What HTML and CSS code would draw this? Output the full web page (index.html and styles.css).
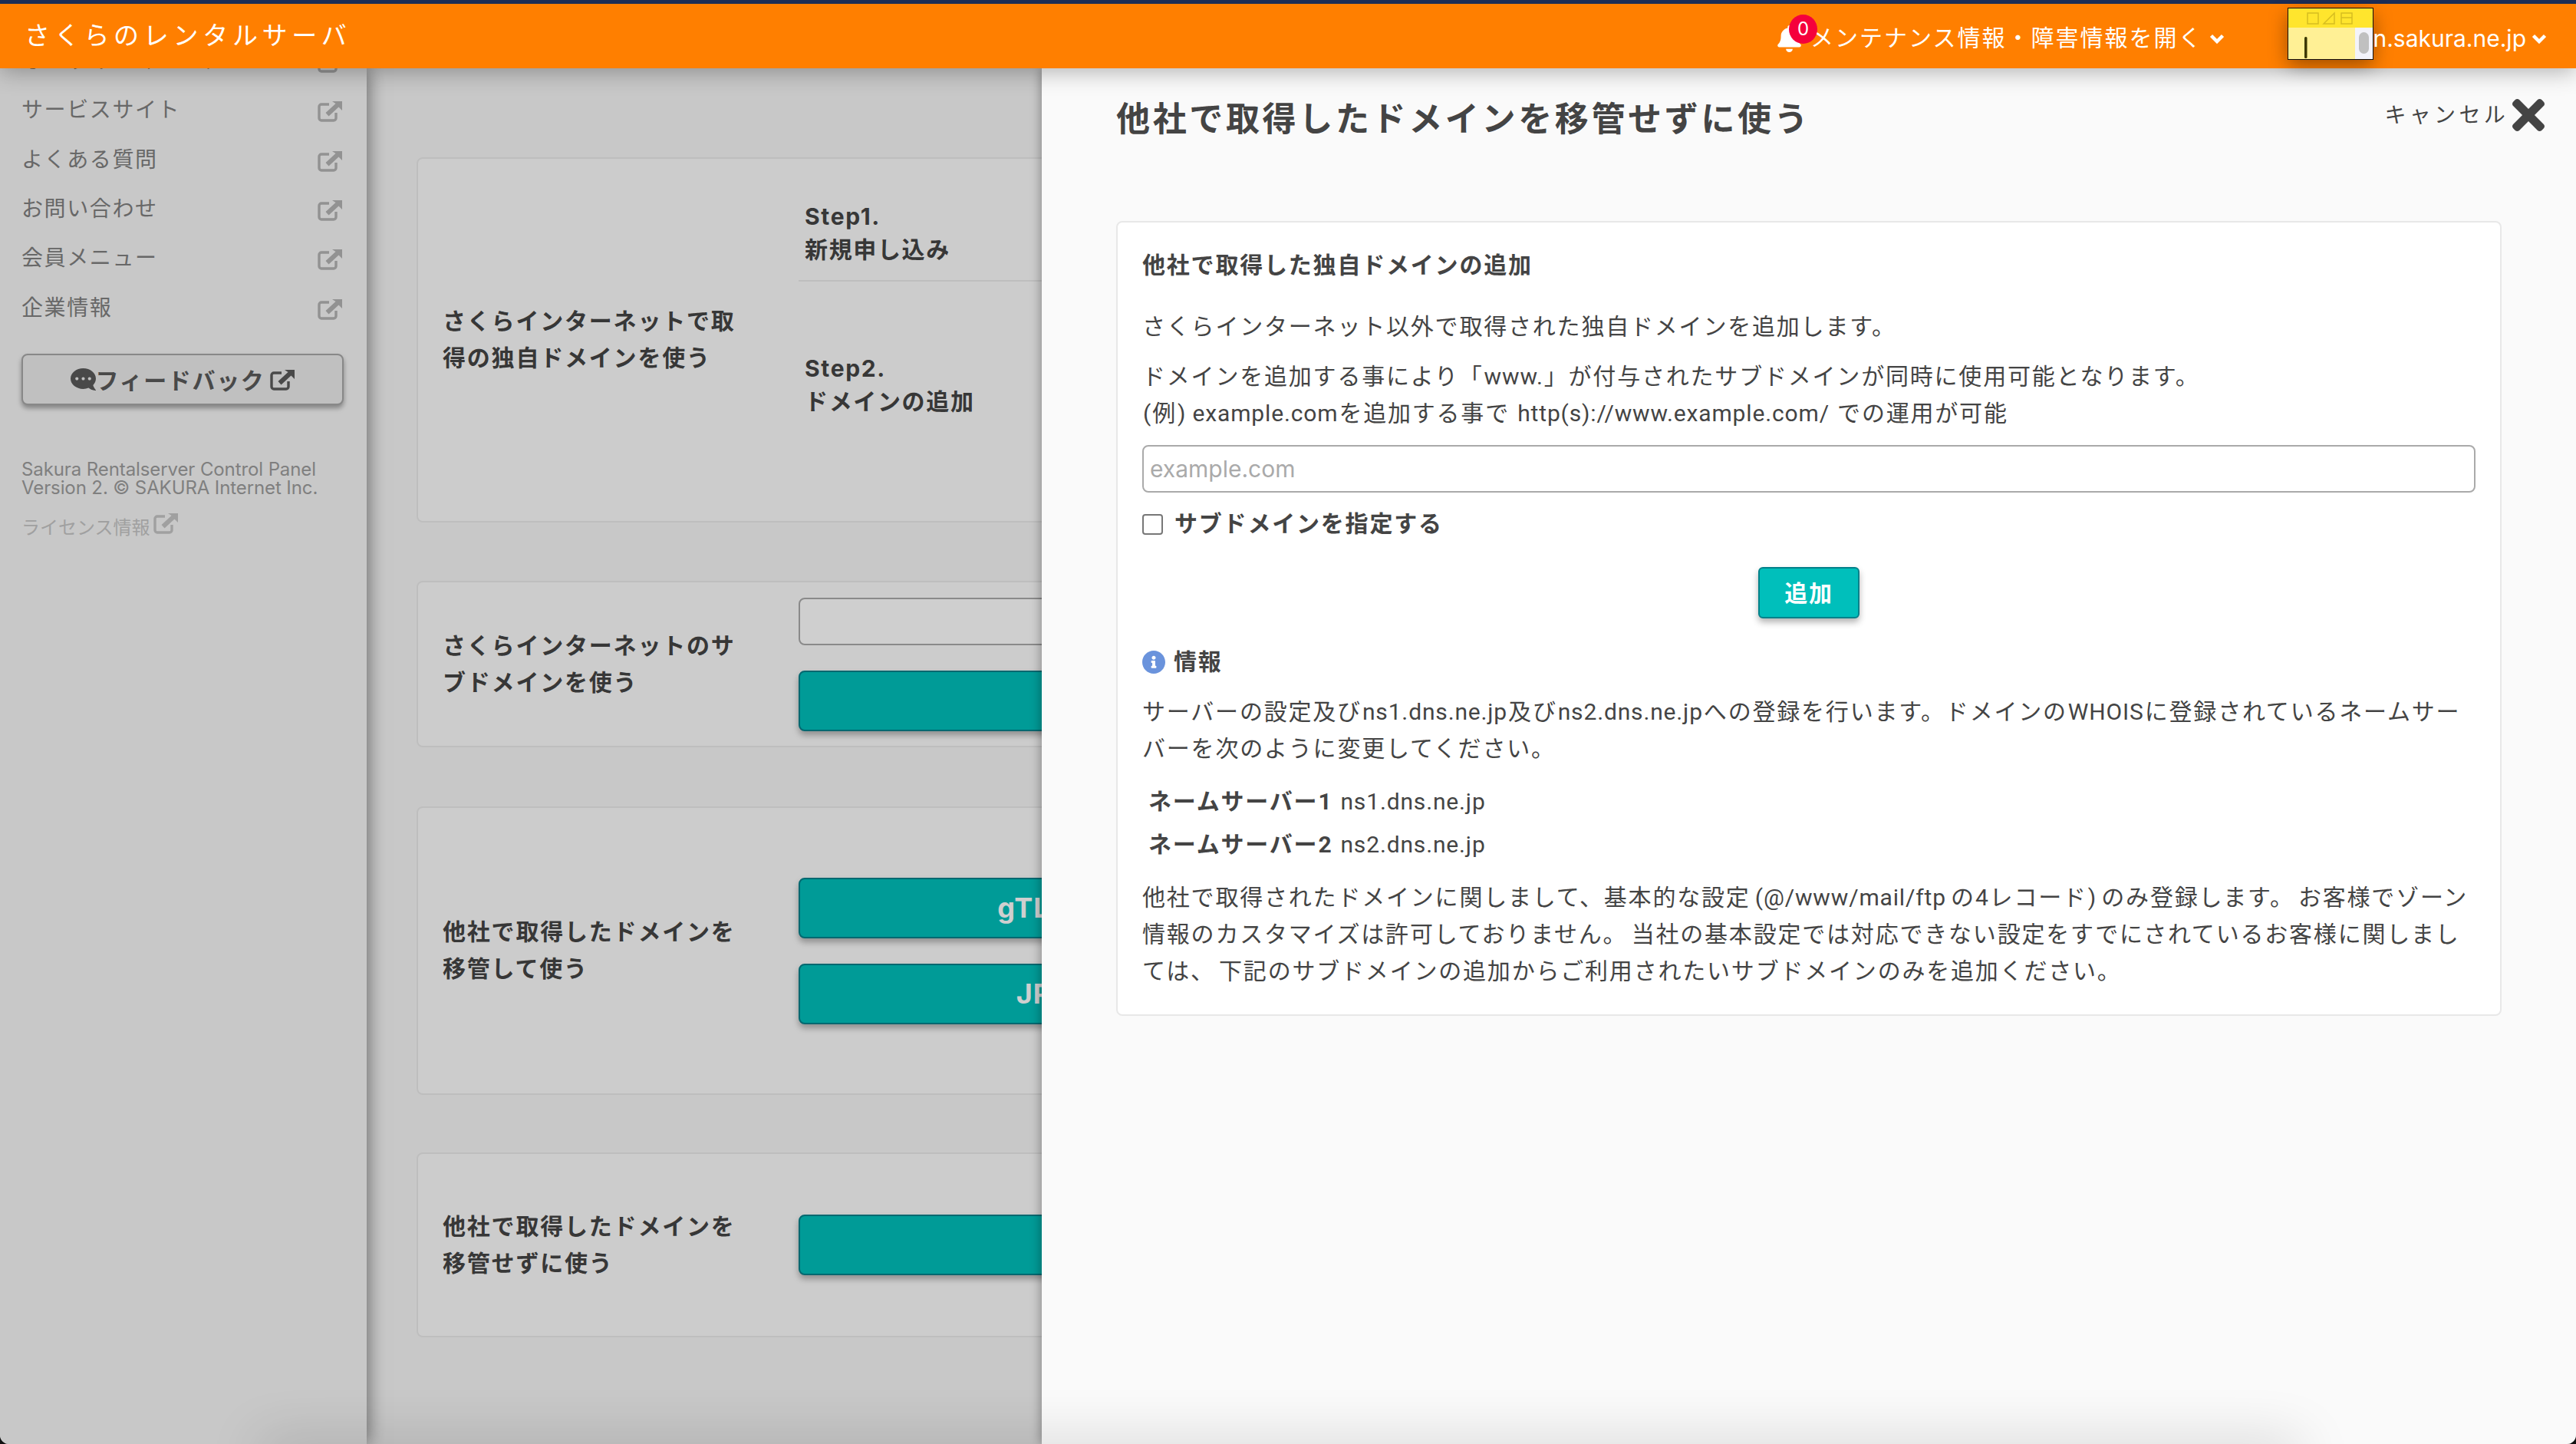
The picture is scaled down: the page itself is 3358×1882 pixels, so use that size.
FILE: index.html
```html
<!DOCTYPE html>
<html lang="ja">

<head>
  <meta charset="utf-8">
  <title>さくらのレンタルサーバ</title>
  <link rel="stylesheet" href="styles.css">
</head>

<body>
  <svg class="icon-defs" aria-hidden="true">
    <symbol id="icon-external" viewBox="0 0 32 28">
      <path d="M15 5H5a3 3 0 0 0-3 3v15a3 3 0 0 0 3 3h16a3 3 0 0 0 3-3v-7" fill="none" stroke="currentColor" stroke-width="3.4" />
      <path d="M19 1h13v12l-4.500-4.500-13 12-4-4.500 13-12z" fill="currentColor" />
    </symbol>
    <symbol id="icon-chevron" viewBox="0 0 20 13">
      <path d="M2.500 2.500 10 10l7.500-7.500" fill="none" stroke="currentColor" stroke-width="4.500" />
    </symbol>
  </svg>

  <div class="window">
    <header class="topbar">
      <div class="brand">さくらのレンタルサーバ</div>
      <div class="notice">
        <span class="bell">
          <svg class="bell-icon" viewBox="0 0 448 512">
            <path fill="currentColor" d="M224 512c35.320 0 63.970-28.650 63.970-64H160.030c0 35.350 28.650 64 63.970 64zm215.390-149.710c-19.320-20.760-55.470-51.990-55.470-154.290 0-77.700-54.480-139.900-127.940-155.160V32c0-17.670-14.320-32-31.980-32s-31.980 14.330-31.980 32v20.840C118.560 68.100 64.080 130.300 64.080 208c0 102.300-36.150 133.530-55.470 154.290-6 6.450-8.660 14.160-8.610 21.710.11 16.400 12.980 32 32.100 32h383.800c19.120 0 32-15.600 32.100-32 .05-7.550-2.610-15.270-8.610-21.710z" />
          </svg>
          <span class="badge">0</span>
        </span>
        <span>メンテナンス情報・障害情報を開く</span>
        <svg class="chevron"><use href="#icon-chevron" /></svg>
      </div>
      <svg class="note" viewBox="0 0 110 66">
        <rect width="110" height="25" fill="#ffe52d" />
        <rect y="25" width="87" height="41" fill="#fff095" />
        <rect x="87" y="25" width="23" height="41" fill="#f3f3fa" />
        <rect x="92" y="31" width="13" height="28" rx="6.500" fill="#c0c0c0" />
        <rect x="21" y="37" width="3.500" height="28" rx="1.500" fill="#3c3800" />
        <g fill="none" stroke="#d6bd20" stroke-width="1.500">
          <rect x="25" y="6" width="14" height="14" />
          <path d="M46 20 60 6v14z" />
          <rect x="69" y="6" width="14" height="14" />
          <path d="M69 12h14" />
        </g>
      </svg>
      <div class="account">
        <span>n.sakura.ne.jp</span>
        <svg class="chevron"><use href="#icon-chevron" /></svg>
      </div>
    </header>

    <div class="main">
      <aside class="sidebar">
        <ul class="side-nav">
          <li><span>オンラインマニュアル</span><svg class="ext"><use href="#icon-external" /></svg></li>
          <li><span>サービスサイト</span><svg class="ext"><use href="#icon-external" /></svg></li>
          <li><span>よくある質問</span><svg class="ext"><use href="#icon-external" /></svg></li>
          <li><span>お問い合わせ</span><svg class="ext"><use href="#icon-external" /></svg></li>
          <li><span>会員メニュー</span><svg class="ext"><use href="#icon-external" /></svg></li>
          <li><span>企業情報</span><svg class="ext"><use href="#icon-external" /></svg></li>
        </ul>
        <button class="feedback">
          <svg class="comment-icon" viewBox="0 0 512 512">
            <path fill="currentColor" transform="matrix(-1 0 0 1 512 0)" d="M256 32C114.600 32 0 125.100 0 240c0 49.600 21.400 95 57 130.700C44.500 421.100 2.700 466 2.200 466.500c-2.200 2.300-2.800 5.700-1.500 8.700S4.800 480 8 480c66.300 0 116-31.800 140.600-51.400 32.700 12.300 69 19.400 107.400 19.400 141.400 0 256-93.100 256-208S397.400 32 256 32zM128 272c-17.700 0-32-14.300-32-32s14.300-32 32-32 32 14.300 32 32-14.300 32-32 32zm128 0c-17.700 0-32-14.300-32-32s14.300-32 32-32 32 14.300 32 32-14.300 32-32 32zm128 0c-17.700 0-32-14.300-32-32s14.300-32 32-32 32 14.300 32 32-14.300 32-32 32z" />
          </svg>
          <span>フィードバック</span>
          <svg class="ext feedback-ext"><use href="#icon-external" /></svg>
        </button>
        <p class="copyright">Sakura Rentalserver Control Panel<br>Version 2. © SAKURA Internet Inc.</p>
        <p class="license">ライセンス情報<svg class="ext license-ext"><use href="#icon-external" /></svg></p>
      </aside>

      <section class="content">
        <div class="option option-steps">
          <div class="option-label">さくらインターネットで取得の独自ドメインを使う</div>
          <div class="option-body">
            <div class="step step-first"><b>Step1.</b><br><b>新規申し込み</b></div>
            <div class="step step-second"><b>Step2.</b><br><b>ドメインの追加</b></div>
          </div>
        </div>
        <div class="option option-sub">
          <div class="option-label">さくらインターネットのサブドメインを使う</div>
          <div class="option-body">
            <div class="fake-input"></div>
            <div class="wide-btn"></div>
          </div>
        </div>
        <div class="option option-move">
          <div class="option-label">他社で取得したドメインを移管して使う</div>
          <div class="option-body">
            <div class="wide-btn">gTLD</div>
            <div class="wide-btn">JP</div>
          </div>
        </div>
        <div class="option option-keep">
          <div class="option-label">他社で取得したドメインを移管せずに使う</div>
          <div class="option-body">
            <div class="wide-btn"></div>
          </div>
        </div>
      </section>

      <div class="overlay"></div>

      <section class="panel">
        <div class="panel-head">
          <h1>他社で取得したドメインを移管せずに使う</h1>
          <div class="cancel">
            <span class="cancel-text">キャンセル</span>
            <svg class="cancel-icon" viewBox="0 80 352 352">
              <path fill="currentColor" d="M242.720 256l100.070-100.070c12.280-12.280 12.280-32.190 0-44.480l-22.240-22.240c-12.280-12.280-32.190-12.280-44.480 0L176 189.280 75.930 89.210c-12.280-12.280-32.190-12.280-44.480 0L9.210 111.450c-12.280 12.280-12.280 32.190 0 44.480L109.280 256 9.210 356.070c-12.280 12.280-12.280 32.190 0 44.480l22.240 22.240c12.280 12.280 32.200 12.280 44.480 0L176 322.720l100.070 100.070c12.280 12.280 32.200 12.280 44.480 0l22.240-22.240c12.280-12.280 12.280-32.190 0-44.480L242.720 256z" />
            </svg>
          </div>
        </div>

        <div class="panel-card">
          <h2>他社で取得した独自ドメインの追加</h2>
          <p>さくらインターネット以外で取得された独自ドメインを追加します。</p>
          <p>ドメインを追加する事により「<span class="en">www.</span>」が付与されたサブドメインが同時に使用可能となります。<br><span class="en">(</span>例<span class="en">) example.com</span>を追加する事で <span class="en">http(s)://www.example.com/</span> での運用が可能</p>
          <input class="domain-input" type="text" placeholder="example.com">
          <label class="check-row"><input type="checkbox"><span>サブドメインを指定する</span></label>
          <div class="add-row"><button class="add-btn">追加</button></div>
          <div class="info-title">
            <svg class="info-icon" viewBox="8 8 496 496">
              <path fill="#6a93dc" d="M256 8C119.043 8 8 119.083 8 256c0 136.997 111.043 248 248 248s248-111.003 248-248C504 119.083 392.957 8 256 8zm0 110c23.196 0 42 18.804 42 42s-18.804 42-42 42-42-18.804-42-42 18.804-42 42-42zm56 254c0 6.627-5.373 12-12 12h-88c-6.627 0-12-5.373-12-12v-24c0-6.627 5.373-12 12-12h12v-64h-12c-6.627 0-12-5.373-12-12v-24c0-6.627 5.373-12 12-12h64c6.627 0 12 5.373 12 12v100h12c6.627 0 12 5.373 12 12v24z" />
            </svg>
            <span>情報</span>
          </div>
          <p>サーバーの設定及び<span class="en">ns1.dns.ne.jp</span>及び<span class="en">ns2.dns.ne.jp</span>への登録を行います。ドメインの<span class="en">WHOIS</span>に登録されているネームサー<br>バーを次のように変更してください。</p>
          <table class="ns-table">
            <tr><th>ネームサーバー1</th><td class="en">ns1.dns.ne.jp</td></tr>
            <tr><th>ネームサーバー2</th><td class="en">ns2.dns.ne.jp</td></tr>
          </table>
          <p class="notes">他社で取得されたドメインに関しまして、基本的な設定 <span class="en">(@/www/mail/ftp</span> の4レコード<span class="en">)</span> のみ登録します。 お客様でゾーン<br>情報のカスタマイズは許可しておりません。 当社の基本設定では対応できない設定をすでにされているお客様に関しまし<br>ては、 下記のサブドメインの追加からご利用されたいサブドメインのみを追加ください。</p>
        </div>
      </section>

      <div class="bottom-shade"></div>
    </div>
  </div>
</body>

</html>
```
FILE: styles.css
```css
* {
  box-sizing: border-box;
}

html,
body {
  height: 100%;
}

body {
  margin: 0;
  background-color: #111;
  color: #444;
  font-family: Roboto, "Noto Sans CJK JP", sans-serif;
  font-size: 30px;
  line-height: 48px;
  letter-spacing: 1.8px;
}

.en {
  margin: 0 1px;
  letter-spacing: 0.85px;
}

.icon-defs {
  display: none;
}

.window {
  display: flex;
  flex-direction: column;
  height: 100%;
  overflow: hidden;
  border-radius: 0 0 12px 12px;
}

/* top bar */
.topbar {
  position: relative;
  z-index: 5;
  display: flex;
  align-items: center;
  flex: none;
  height: 89px;
  padding: 0 38px 0 32px;
  border-top: 5px solid #1c2d55;
  background-color: #ff7f00;
  color: #fff;
  box-shadow: 0 4px 28px rgba(0, 0, 0, 0.3);
}

.brand {
  font-size: 33px;
  letter-spacing: 5.7px;
}

.notice {
  display: flex;
  align-items: center;
  margin-left: auto;
  padding-top: 6px;
  letter-spacing: 2px;
}

.bell {
  position: relative;
  display: flex;
  margin-right: 12px;
}

.bell-icon {
  width: 31px;
  height: 35px;
}

.badge {
  position: absolute;
  top: -14px;
  left: 15px;
  width: 37px;
  height: 38px;
  border-radius: 50%;
  background-color: #f5003c;
  font-family: Inter, sans-serif;
  font-size: 24px;
  line-height: 38px;
  text-align: center;
  letter-spacing: 0;
}

.chevron {
  flex: none;
  width: 20px;
  height: 13px;
  margin-left: 9px;
}

.note {
  flex: none;
  width: 110px;
  height: 66px;
  margin: -6px 0 0 83px;
  outline: 1px solid #111;
  box-shadow: 0 8px 26px rgba(0, 0, 0, 0.4);
}

.account {
  display: flex;
  align-items: center;
  padding-top: 6px;
  font-family: Inter, sans-serif;
  letter-spacing: 0;
}

.account .chevron {
  margin-left: 7px;
}

/* page behind the panel */
.main {
  position: relative;
  display: flex;
  flex: 1;
  min-height: 0;
  background-color: #f7f7f7;
}

.overlay {
  position: absolute;
  inset: 0;
  z-index: 2;
  background-color: rgba(0, 0, 0, 0.19);
}

.sidebar {
  position: relative;
  z-index: 1;
  flex: none;
  width: 478px;
  background-color: #f7f7f7;
  box-shadow: 0 0 24px rgba(0, 0, 0, 0.55);
}

.side-nav {
  margin: -41px 0 0;
  padding: 0;
  list-style: none;
  color: #808080;
  font-size: 28px;
  letter-spacing: 1.6px;
}

.side-nav li {
  display: flex;
  align-items: center;
  justify-content: space-between;
  height: 64.3px;
  padding: 0 32px 0 28px;
}

.ext {
  flex: none;
  width: 32px;
  height: 28px;
  margin-top: 2px;
  color: #b4b4b4;
}

.feedback {
  display: flex;
  align-items: center;
  justify-content: center;
  width: 420px;
  height: 67px;
  margin: 27px 0 0 28px;
  padding: 0;
  border: 2px solid #a8a8a8;
  border-radius: 8px;
  background-color: #ededed;
  color: #5a5a5a;
  font-family: inherit;
  font-size: 30px;
  font-weight: 700;
  letter-spacing: 1.65px;
  box-shadow: 0 4px 6px rgba(0, 0, 0, 0.35);
}

.comment-icon {
  width: 33px;
  height: 33px;
}

.feedback-ext {
  margin-left: 7px;
  color: #5a5a5a;
}

.copyright {
  margin: 72px 0 0 28px;
  color: #9d9d9d;
  font-family: Inter, sans-serif;
  font-size: 24px;
  line-height: 24px;
  letter-spacing: -0.1px;
}

.license {
  display: flex;
  align-items: flex-start;
  margin: 16px 0 0 28px;
  color: #c6c6c6;
  font-size: 24px;
  line-height: 48px;
  letter-spacing: 0;
}

.license-ext {
  margin: 4px 0 0 4px;
  color: #c6c6c6;
}

.content {
  flex: none;
  width: 1402px;
  padding: 116px 0 0 65px;
}

.option {
  display: grid;
  grid-template-columns: 496px 1fr;
  align-items: center;
  width: 1287px;
  margin-bottom: 76px;
  border: 2px solid #eaeaea;
  border-radius: 8px;
  background-color: #fcfcfc;
}

.option-label {
  padding: 0 70px 0 32px;
  font-weight: 700;
}

.option-steps .option-body {
  padding-bottom: 134px;
}

.option-sub {
  margin-bottom: 77px;
}

.option-sub .option-body {
  padding: 20px 0 19px;
}

.option-move {
  margin-bottom: 75px;
}

.option-move .option-body {
  padding: 91px 0 90px;
}

.option-keep .option-body {
  padding: 79px 0;
}

.step {
  padding: 0 8px;
  font-family: Inter, "Noto Sans CJK JP", sans-serif;
  font-size: 30px;
  line-height: 43px;
  letter-spacing: 1.65px;
}

.step-first {
  padding-top: 54px;
  padding-bottom: 18px;
  border-bottom: 2px solid #eaeaea;
}

.step-second {
  padding-top: 92px;
}

.fake-input {
  width: 614px;
  height: 62px;
  border: 2px solid #aaa;
  border-radius: 8px;
  background-color: #fff;
}

.wide-btn {
  width: 614px;
  height: 79px;
  border: 2px solid #00818a;
  border-radius: 8px;
  background-color: #00bfbb;
  color: #fff;
  font-family: Inter, sans-serif;
  font-size: 36px;
  font-weight: 700;
  line-height: 75px;
  text-align: center;
  letter-spacing: 1px;
  box-shadow: 0 5px 8px rgba(0, 0, 0, 0.3);
}

.wide-btn+.wide-btn,
.fake-input+.wide-btn {
  margin-top: 33px;
}

/* slide-in panel */
.panel {
  position: absolute;
  top: 0;
  right: 0;
  bottom: 0;
  z-index: 3;
  width: 2000px;
  padding: 37px 97px 0;
  background-color: #fafafa;
  box-shadow: -2px 0 12px rgba(0, 0, 0, 0.3);
}

.panel-head {
  display: flex;
  align-items: flex-start;
  justify-content: space-between;
  margin-bottom: 102px;
}

.panel-head h1 {
  margin: 0;
  font-size: 44px;
  font-weight: 700;
  line-height: 60px;
  letter-spacing: 3.65px;
}

.cancel {
  display: flex;
  align-items: center;
  margin: -1px -56px 0 0;
  font-size: 28px;
  letter-spacing: 4.3px;
}

.cancel-text {
  padding-top: 2px;
}

.cancel-icon {
  width: 42px;
  height: 42px;
  margin-left: 5px;
}

.panel-card {
  padding: 34px 32px 32px;
  border: 2px solid #e8e8e8;
  border-radius: 8px;
  background-color: #fff;
}

.panel-card>*+* {
  margin-top: 17px;
}

.panel-card h2 {
  margin: 0;
  font-size: 30px;
  font-weight: 700;
  line-height: 44px;
}

.panel-card p {
  margin-bottom: 0;
}

.panel-card>h2+p {
  margin-top: 34px;
}

.panel-card .notes {
  word-spacing: -4px;
}

.domain-input {
  display: block;
  width: 100%;
  height: 62px;
  padding: 0 8px;
  border: 2px solid #aaa;
  border-radius: 8px;
  color: #444;
  font-family: Inter, sans-serif;
  font-size: 30px;
  letter-spacing: 0;
}

.domain-input::placeholder {
  color: #aaa;
}

.check-row {
  display: flex;
  align-items: center;
  font-weight: 700;
}

.check-row input {
  width: 27px;
  height: 27px;
  margin: 0 15px 0 0;
  border: 2px solid #777;
  border-radius: 4px;
  background-color: #fff;
  appearance: none;
}

.add-row {
  display: flex;
  justify-content: center;
  margin-top: 32px;
}

.add-btn {
  width: 132px;
  height: 67px;
  padding: 0 0 4px;
  border: 2px solid #00818a;
  border-radius: 6px;
  background-color: #00bfbb;
  color: #fff;
  font-family: inherit;
  font-size: 30px;
  font-weight: 700;
  letter-spacing: 1.65px;
  box-shadow: 0 5px 8px rgba(0, 0, 0, 0.3);
}

.info-title {
  display: flex;
  align-items: center;
  margin-top: 33px;
  font-weight: 700;
}

.info-icon {
  width: 30px;
  height: 30px;
  margin-right: 11px;
}

.ns-table {
  border-collapse: collapse;
}

.ns-table th,
.ns-table td {
  height: 56px;
  padding: 0;
  line-height: 48px;
  text-align: left;
}

.ns-table th {
  padding: 0 10px 0 8px;
  font-weight: 700;
}

.bottom-shade {
  position: absolute;
  right: 360px;
  bottom: -30px;
  left: 340px;
  z-index: 4;
  height: 30px;
  box-shadow: 0 0 70px rgba(0, 0, 0, 0.22);
}
```
